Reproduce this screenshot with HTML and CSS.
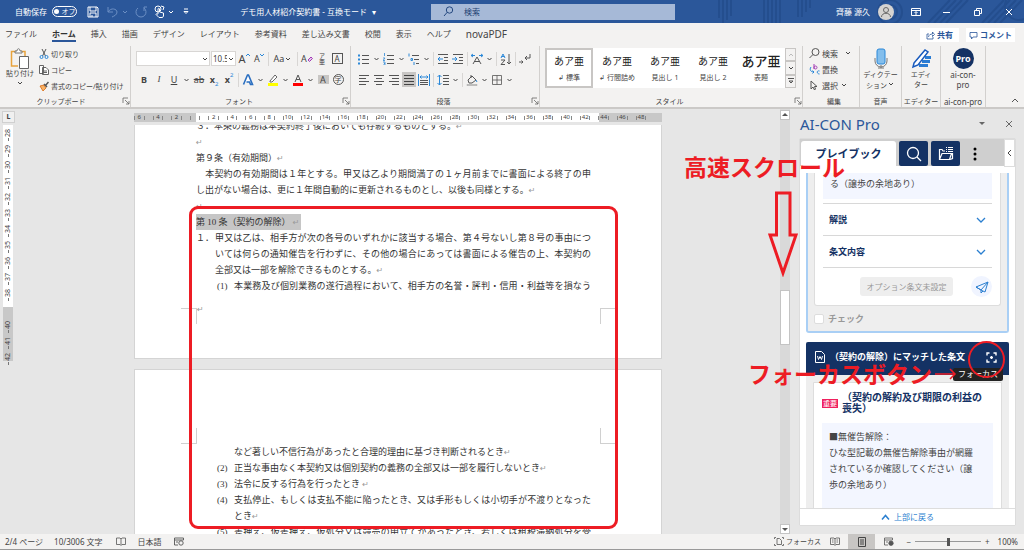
FILE: index.html
```html
<!DOCTYPE html>
<html lang="ja">
<head>
	<meta charset="UTF-8">
	<title>デモ用人材紹介契約書</title>
	<link rel="stylesheet" href="styles.css">
</head>
<body>
	<svg class="defs" aria-hidden="true">
		<symbol id="chev" viewBox="0 0 8 8"><path d="M2 3l2 2 2-2" fill="none" stroke="currentColor"/></symbol>
		<symbol id="launch" viewBox="0 0 8 8"><path d="M1 6V1h5M3 3l4 4M7 4v3H4" fill="none" stroke="#666" stroke-width=".8"/></symbol>
	</svg>

	<header class="titlebar">
		<svg class="pattern" viewBox="0 0 310 23" preserveAspectRatio="xMaxYMid slice" fill="none" stroke="#244e8e" stroke-width="2">
			<path d="M5 0v18M9 0v23M13 0v20M17 0v16M50 0v23M54 0v23M58 0v23M62 0v23M66 0v23M84 0v17M88 0v17M92 0v12M96 0v8"/>
			<circle cx="176" cy="12" r="7"/><circle cx="176" cy="12" r="12"/>
			<path d="M214 23l22-23M220 23l22-23M226 23l22-23M232 23l22-23M268 23l22-23M274 23l22-23M280 23l22-23M286 23l22-23"/>
			<circle cx="305" cy="6" r="14"/>
		</svg>
		<div class="title-left">
			<label class="autosave">自動保存 <button class="switch">オフ</button></label>
			<button class="ico"><svg width="12" height="12" viewBox="0 0 12 12" fill="none" stroke="#fff"><path d="M1 1h9l1 1v9H1zM3 1v4h6V1M3 11V7h6v4M5 9v2"/></svg></button>
			<button class="ico dim"><svg width="12" height="12" viewBox="0 0 12 12" fill="none" stroke="#6c8fc4"><path d="M1 1v5h5M1 6c3-5 9-3 9 0 0 3-3 4-5 5"/></svg></button>
			<svg class="chev dim" width="8" height="8"><use href="#chev"/></svg>
			<button class="ico dim"><svg width="12" height="12" viewBox="0 0 12 12" fill="none" stroke="#6c8fc4"><path d="M3 2a5 5 0 1 0 6 0M9 5V1h3"/></svg></button>
			<button class="ico"><svg width="11" height="13" viewBox="0 0 11 13" fill="none" stroke="#fff"><circle cx="4" cy="4" r="3"/><path d="M4 9V4c0-1 1.500-1 1.500 0v3l4 1v3l-1 1.500H5L2 9.500c0-1 1-1 2 0M7 1l3 1-1 3"/></svg></button>
			<svg class="chev" width="8" height="8"><use href="#chev"/></svg>
			<svg class="more" width="8" height="8" viewBox="0 0 8 8" fill="none" stroke="#fff"><path d="M2 1h4M2 3.500h4l-2 2z"/></svg>
			<span class="doc-title">デモ用人材紹介契約書 - 互換モード</span>
			<span class="caret">▾</span>
		</div>
		<label class="search">
			<svg width="11" height="11" viewBox="0 0 11 11" fill="none" stroke="#24487f"><circle cx="6.500" cy="4" r="3.200"/><path d="M4.200 6.300L1 10"/></svg>
			<input type="text" value="検索" aria-label="検索">
		</label>
		<div class="title-right">
			<span>齊藤 源久</span>
			<svg width="16" height="16" viewBox="0 0 16 16"><circle cx="8" cy="8" r="8" fill="#d5d3d1"/><g fill="none" stroke="#666"><circle cx="8" cy="6" r="2.500"/><path d="M3.500 13c0-5 9-5 9 0"/></g></svg>
			<button class="win"><svg width="10" height="8" viewBox="0 0 10 8" fill="none" stroke="#fff"><path d="M.5.5h9v7h-9zM.5 2.500h9M5 7V4M3.500 5L5 3.500 6.500 5"/></svg></button>
			<button class="win"><svg width="8" height="8" viewBox="0 0 8 8" stroke="#fff"><path d="M0 4.500h7"/></svg></button>
			<button class="win"><svg width="8" height="8" viewBox="0 0 8 8" fill="none" stroke="#fff"><path d="M.5 2.500h5v5h-5zM2.500 2V.5h5v5H6"/></svg></button>
			<button class="win"><svg width="8" height="8" viewBox="0 0 8 8" stroke="#fff"><path d="M1 1l6 6M7 1L1 7"/></svg></button>
		</div>
	</header>

	<nav class="tabs">
		<a href="#">ファイル</a>
		<a href="#" class="active">ホーム</a>
		<a href="#">挿入</a>
		<a href="#">描画</a>
		<a href="#">デザイン</a>
		<a href="#">レイアウト</a>
		<a href="#">参考資料</a>
		<a href="#">差し込み文書</a>
		<a href="#">校閲</a>
		<a href="#">表示</a>
		<a href="#">ヘルプ</a>
		<a href="#" class="latin">novaPDF</a>
		<div class="share">
			<button><svg width="9" height="9" viewBox="0 0 9 9" fill="none" stroke="#2b579a" stroke-width=".8"><path d="M3 3H1v5h6V6M2.500 6c0-2 2-3 4-3V1l2 2.500-2 2V4"/></svg>共有</button>
			<button><svg width="9" height="9" viewBox="0 0 9 9" fill="none" stroke="#2b579a" stroke-width=".8"><path d="M1 1.500h7v4.500H4L2.500 8V6H1z"/></svg>コメント</button>
		</div>
	</nav>

	<section class="ribbon">
		<div class="group g-clip">
			<div class="body clip">
				<button class="big">
					<svg width="20" height="21" viewBox="0 0 20 21" fill="none"><path d="M8 18H1.500V3.500H15V8" stroke="#e8a33d" stroke-width="1.500"/><path d="M5 5V3h2c0-3 3-3 3 0h2v2z" fill="#fff" stroke="#777"/><path d="M9.500 8.500h9v12h-9z" fill="#fff" stroke="#666"/></svg>
					<span>貼り付け</span>
					<svg width="8" height="8"><use href="#chev"/></svg>
				</button>
				<div class="stack">
					<button><svg width="10" height="10" viewBox="0 0 10 10" fill="none"><path d="M3 0l3.500 7M7 0L3.500 7" stroke="#555"/><circle cx="2.500" cy="8" r="1.500" stroke="#2b88d8"/><circle cx="7.500" cy="8" r="1.500" stroke="#2b88d8"/></svg>切り取り</button>
					<button><svg width="10" height="10" viewBox="0 0 10 10" fill="#fff" stroke="#555" stroke-width=".9"><path d="M.5.5h4v8h-4zM3.500 2.500h3.500l2.500 2.500v4.500h-6zM5 6h3M5 7.500h3"/></svg>コピー</button>
					<button><svg width="10" height="10" viewBox="0 0 10 10"><path d="M1 5l4-1 2 3-3 3z" fill="#f7b267" stroke="#d9690f" stroke-width=".8"/><path d="M5 3l3 3M6.500 4.500L9.500 1" stroke="#555" stroke-width="1.500"/></svg>書式のコピー/貼り付け</button>
				</div>
			</div>
			<div class="caption"><span>クリップボード</span><svg width="8" height="8"><use href="#launch"/></svg></div>
		</div>

		<div class="group g-font">
			<div class="body">
				<div class="row">
					<span class="combo face"><select aria-label="フォント"><option></option></select><svg width="8" height="8"><use href="#chev"/></svg></span>
					<span class="combo size"><select aria-label="サイズ"><option>10.5</option></select><svg width="8" height="8"><use href="#chev"/></svg></span>
					<button class="t"><span class="lg">A</span><svg class="up" width="4" height="4" viewBox="0 0 4 4"><path d="M0 3l2-2 2 2" fill="none" stroke="#2b88d8"/></svg></button>
					<button class="t"><span>A</span><svg class="up" width="4" height="4" viewBox="0 0 4 4"><path d="M0 1l2 2 2-2" fill="none" stroke="#2b88d8"/></svg></button>
					<i class="sep"></i>
					<button class="t wide">Aa<svg width="8" height="8"><use href="#chev"/></svg></button>
					<i class="sep"></i>
					<button class="t">A<svg width="6" height="7" viewBox="0 0 6 7"><path d="M1 5l3-3 1.500 1.500-3 3z" fill="#e6c7ee" stroke="#a23bb5"/></svg></button>
					<button class="ruby"><span>ア</span><span>亜</span></button>
					<button class="t"><span class="boxed">A</span></button>
				</div>
				<div class="row">
					<button class="t"><b>B</b></button>
					<button class="t serif"><i>I</i></button>
					<button class="t"><u>U</u></button>
					<svg class="dd" viewBox="0 0 8 8"><use href="#chev"/></svg>
					<button class="t"><s>ab</s></button>
					<button class="t"><b>x</b><sub>2</sub></button>
					<button class="t"><b>x</b><sup>2</sup></button>
					<i class="sep"></i>
					<button><svg width="12" height="12" viewBox="0 0 12 12"><path d="M1.500 10.500L5.500 1h1l4 9.500h-2L7.500 8h-3" fill="#fff" stroke="#2b6fc0" stroke-width="1.600"/></svg></button>
					<svg class="dd" viewBox="0 0 8 8"><use href="#chev"/></svg>
					<button><svg width="12" height="12" viewBox="0 0 12 12"><path d="M3 7l5-6 2 2-5 5H3z" fill="#fff" stroke="#666"/><path d="M1 9h10v3H1z" fill="#ff0"/></svg></button>
					<svg class="dd" viewBox="0 0 8 8"><use href="#chev"/></svg>
					<button><svg width="12" height="12" viewBox="0 0 12 12"><path d="M3 8l3-7 3 7M4 5.500h4" fill="none" stroke="#555"/><path d="M1 9h10v3H1z" fill="#f00"/></svg></button>
					<svg class="dd" viewBox="0 0 8 8"><use href="#chev"/></svg>
					<button class="t"><span class="shaded">A</span></button>
					<button class="t"><span class="circled">字</span></button>
				</div>
			</div>
			<div class="caption"><span>フォント</span><svg width="8" height="8"><use href="#launch"/></svg></div>
		</div>

		<div class="group g-para">
			<div class="body">
				<div class="row">
					<button><svg width="12" height="12" viewBox="0 0 12 12"><path d="M4 2.500h7M4 6.500h7M4 10.500h7" stroke="#555"/><path d="M0 1.500h2v2H0zM0 5.500h2v2H0zM0 9.500h2v2H0z" fill="#2b88d8"/></svg></button>
					<svg class="dd" viewBox="0 0 8 8"><use href="#chev"/></svg>
					<button><svg width="12" height="12" viewBox="0 0 12 12" fill="none"><path d="M4 2.500h7M4 6.500h7M4 10.500h7" stroke="#555"/><path d="M1.500 0v3M0 5h2L0 7.500h2M0 9h2v3H0M1 10.500h1" stroke="#2b88d8" stroke-width=".8"/></svg></button>
					<svg class="dd" viewBox="0 0 8 8"><use href="#chev"/></svg>
					<button><svg width="12" height="12" viewBox="0 0 12 12" fill="none"><path d="M4 2.500h7M6 6.500h5M8 10.500h3" stroke="#555"/><path d="M1 .5v3M3 5.500h1.500v2H3zM6 9v3" stroke="#2b88d8"/></svg></button>
					<svg class="dd" viewBox="0 0 8 8"><use href="#chev"/></svg>
					<i class="sep"></i>
					<button><svg width="12" height="12" viewBox="0 0 12 12" fill="none"><path d="M1 1.500h10M7 4.500h4M7 7.500h4M1 10.500h10" stroke="#555"/><path d="M6 6H1M3 4L1 6l2 2" stroke="#2b88d8"/></svg></button>
					<button><svg width="12" height="12" viewBox="0 0 12 12" fill="none"><path d="M1 1.500h10M7 4.500h4M7 7.500h4M1 10.500h10" stroke="#555"/><path d="M0 6h5M3 4l2 2-2 2" stroke="#2b88d8"/></svg></button>
					<i class="sep"></i>
					<button><svg width="12" height="12" viewBox="0 0 12 12" fill="none"><path d="M2 11l4-7 4 7M3 8.500h6" stroke="#555"/><path d="M0 2.500h4M2 1L0 2.500 2 4M12 2.500H8M10 1l2 1.500L10 4" stroke="#2b88d8"/></svg></button>
					<svg class="dd" viewBox="0 0 8 8"><use href="#chev"/></svg>
					<i class="sep"></i>
					<button><svg width="12" height="12" viewBox="0 0 12 12" fill="none"><path d="M1 5l2-4 2 4M1.500 3.500h3" stroke="#2b88d8"/><path d="M1 7h4L1 11.500h4M9 1v10M7 9l2 2 2-2" stroke="#555"/></svg></button>
					<i class="sep"></i>
					<button><svg width="12" height="12" viewBox="0 0 12 12" fill="none" stroke="#555"><path d="M11 1v4H6M8 3L6 5l2 2M0 9h4M2.500 7.500L4 9l-1.500 1.500"/></svg></button>
				</div>
				<div class="row">
					<button><svg width="12" height="12" viewBox="0 0 12 12" stroke="#555"><path d="M1 1.500h10M1 4.500h7M1 7.500h10M1 10.500h7"/></svg></button>
					<button><svg width="12" height="12" viewBox="0 0 12 12" stroke="#555"><path d="M1 1.500h10M3 4.500h6M1 7.500h10M3 10.500h6"/></svg></button>
					<button><svg width="12" height="12" viewBox="0 0 12 12" stroke="#555"><path d="M1 1.500h10M4 4.500h7M1 7.500h10M4 10.500h7"/></svg></button>
					<button class="on"><svg width="12" height="12" viewBox="0 0 12 12" stroke="#444"><path d="M1 1.500h10M1 4.500h10M1 7.500h10M1 10.500h10"/></svg></button>
					<button><svg width="12" height="12" viewBox="0 0 12 12" fill="none"><path d="M.5 0v12M11.500 0v12M2 3h8M3.500 1.500L2 3l1.500 1.500M8.500 1.500L10 3 8.500 4.500" stroke="#2b88d8"/><path d="M2 6.500h8M2 8.500h8M2 10.500h8" stroke="#555"/></svg></button>
					<i class="sep"></i>
					<button><svg width="12" height="12" viewBox="0 0 12 12" fill="none"><path d="M6 1.500h6M6 4.500h6M6 7.500h6M6 10.500h6" stroke="#555"/><path d="M2.500 1v10M.5 3l2-2 2 2M.5 9l2 2 2-2" stroke="#2b88d8"/></svg></button>
					<svg class="dd" viewBox="0 0 8 8"><use href="#chev"/></svg>
					<i class="sep"></i>
					<button><svg width="12" height="12" viewBox="0 0 12 12" fill="none"><path d="M2 6l4-4 4 4-4 3H3zM5 4V1" stroke="#555"/><path d="M10 6l1 2" stroke="#2b88d8"/><path d="M1 10.500h10v1H1z" stroke="#999" stroke-width=".6"/></svg></button>
					<svg class="dd" viewBox="0 0 8 8"><use href="#chev"/></svg>
					<button><svg width="12" height="12" viewBox="0 0 12 12" fill="none" stroke="#555"><path d="M1.500 1.500h9v9h-9zM6 1.500v9M1.500 6h9" stroke-width=".8"/></svg></button>
					<svg class="dd" viewBox="0 0 8 8"><use href="#chev"/></svg>
				</div>
			</div>
			<div class="caption"><span>段落</span><svg width="8" height="8"><use href="#launch"/></svg></div>
		</div>

		<div class="group g-style">
			<div class="body gallery">
				<button class="cell picked"><span class="sample">あア亜</span><span>↲ 標準</span></button>
				<button class="cell"><span class="sample">あア亜</span><span>↲ 行間詰め</span></button>
				<button class="cell"><span class="sample">あア亜</span><span>見出し 1</span></button>
				<button class="cell"><span class="sample">あア亜</span><span>見出し 2</span></button>
				<button class="cell"><span class="sample title">あア亜</span><span>表題</span></button>
				<div class="spin">
					<button><svg width="8" height="8" viewBox="0 0 8 8"><path d="M2 5l2-2 2 2" fill="none" stroke="#bbb"/></svg></button>
					<button><svg width="8" height="8"><use href="#chev"/></svg></button>
					<button><svg width="8" height="8" viewBox="0 0 8 8"><path d="M1 1.500h6M2 4h4L4 6z" fill="none" stroke="#555"/></svg></button>
				</div>
			</div>
			<div class="caption"><span>スタイル</span><svg width="8" height="8"><use href="#launch"/></svg></div>
		</div>

		<div class="group g-edit">
			<div class="body stack">
				<button><svg width="11" height="11" viewBox="0 0 11 11" fill="none" stroke="#555"><circle cx="6.500" cy="4" r="3.500"/><path d="M4 6.500L.5 10"/></svg>検索<svg class="gap" width="8" height="8"><use href="#chev"/></svg></button>
				<button><svg width="11" height="11" viewBox="0 0 11 11" fill="none"><path d="M5 0v5M5 3.500c0-2 3-2 3 0s-3 2-3 0" stroke="#a23bb5"/><path d="M2 3c-2 3 0 5 3 5M3.500 6.500L5 8 3.500 9.500M10.500 7c-3-1-3 3 0 3" stroke="#2b88d8"/></svg>置換</button>
				<button><svg width="11" height="11" viewBox="0 0 11 11" fill="none" stroke="#555"><path d="M2 1v8l2-2 1.500 3 1-1L5.500 6.500H8z"/></svg>選択<svg width="8" height="8"><use href="#chev"/></svg></button>
			</div>
			<div class="caption"><span>編集</span></div>
		</div>

		<div class="group g-voice">
			<button class="body big">
				<svg width="14" height="21" viewBox="0 0 14 21"><path d="M1 10v3a5 5 0 0 0 12 0v-3M7 17v3M4 20h6" fill="none" stroke="#777"/><rect x="3" y="1" width="8" height="15" rx="2" fill="#83beec" stroke="#2b88d8"/></svg>
				<span>ディクテー<br>ション<svg width="8" height="8"><use href="#chev"/></svg></span>
			</button>
			<div class="caption"><span>音声</span></div>
		</div>

		<div class="group g-editor">
			<button class="body big">
				<svg width="21" height="21" viewBox="0 0 21 21" fill="none"><path d="M8 17.500h9M11 13.500h8M14 9.500h6" stroke="#2b7cd3" stroke-width="3"/><path d="M3 15L14 2l3 2L7 17l-5 2z" fill="#fff" stroke="#185abd" stroke-width="1.500"/></svg>
				<span>エディ<br>ター</span>
			</button>
			<div class="caption"><span>エディター</span></div>
		</div>

		<div class="group g-ai">
			<button class="body big">
				<span class="pro">Pro</span>
				<span class="latin">ai-con-<br>pro</span>
			</button>
			<div class="caption latin"><span>ai-con-pro</span></div>
		</div>

		<button class="collapse"><svg width="8" height="8" viewBox="0 0 8 8"><path d="M1 5l3-3 3 3" fill="none" stroke="#555"/></svg></button>
	</section>

	<main class="work">
		<div class="vruler">
			<button class="corner">L</button>
			<div class="scale" id="vscale"></div>
		</div>

		<div class="canvas">
			<div class="hruler" id="hscale"></div>
			<div class="pages">
				<article class="page first">
					<div class="text">
						<p>３．本条の義務は本契約終了後においても存続するものとする。<em>↵</em></p>
						<p><em>↵</em></p>
						<p>第９条（有効期間）<em>↵</em></p>
						<p>　本契約の有効期間は１年とする。甲又は乙より期間満了の１ヶ月前までに書面による終了の申し出がない場合は、更に１年間自動的に更新されるものとし、以後も同様とする。<em>↵</em></p>
						<p><em>↵</em></p>
						<p><mark>第 10 条（契約の解除） <em>↵</em></mark></p>
						<div class="item"><span>１．</span><p>甲又は乙は、相手方が次の各号のいずれかに該当する場合、第４号ないし第８号の事由については何らの通知催告を行わずに、その他の場合にあっては書面による催告の上、本契約の全部又は一部を解除できるものとする。<em>↵</em></p></div>
						<div class="item sub"><span>(1)</span><p class="cont">本業務及び個別業務の遂行過程において、相手方の名誉・評判・信用・利益等を損なう</p></div>
					</div>
					<div class="crop bottom"><i></i><em>↵</em><i></i></div>
				</article>
				<article class="page">
					<div class="crop top"><i></i><i></i></div>
					<div class="text">
						<div class="item sub"><span></span><p>など著しい不信行為があったと合理的理由に基づき判断されるとき<em>↵</em></p></div>
						<div class="item sub"><span>(2)</span><p>正当な事由なく本契約又は個別契約の義務の全部又は一部を履行しないとき<em>↵</em></p></div>
						<div class="item sub"><span>(3)</span><p>法令に反する行為を行ったとき <em>↵</em></p></div>
						<div class="item sub"><span>(4)</span><p>支払停止、もしくは支払不能に陥ったとき、又は手形もしくは小切手が不渡りとなったとき<em>↵</em></p></div>
						<div class="item sub"><span>(5)</span><p class="cont">差押え、仮差押え、仮処分又は競売の申立てがあったとき、若しくは租税滞納処分を受</p></div>
					</div>
				</article>
			</div>
		</div>

		<div class="vscroll">
			<button><svg width="6" height="6" viewBox="0 0 6 6"><path d="M0 4l3-3 3 3z" fill="#555"/></svg></button>
			<span class="before"></span>
			<span class="thumb"></span>
			<span class="after"></span>
			<button><svg width="6" height="6" viewBox="0 0 6 6"><path d="M0 2l3 3 3-3z" fill="#555"/></svg></button>
		</div>

		<aside class="pane">
			<div class="pane-head">
				<h2>AI-CON Pro</h2>
				<button><svg width="8" height="8" viewBox="0 0 8 8"><path d="M1 2h6L4 5z" fill="#666"/></svg></button>
				<button><svg width="8" height="8" viewBox="0 0 8 8"><path d="M1 1l6 6M7 1L1 7" stroke="#666"/></svg></button>
			</div>
			<div class="pane-box">
				<div class="pane-tabs">
					<button class="tab">プレイブック</button>
					<button class="navy"><svg width="16" height="16" viewBox="0 0 16 16" fill="none" stroke="#fff" stroke-width="1.300"><circle cx="7" cy="7" r="5.500"/><path d="M11 11l4 4"/></svg></button>
					<button class="navy"><svg width="16" height="16" viewBox="0 0 16 16" fill="none" stroke="#fff" stroke-width="1.200"><path d="M7 5H5L4 3.500H1.500v10h10l2-6H4l-2.500 6M12 13.500l2.500-1V7M8 1.500h1M10 1.500h5M8 3.500h1M10 3.500h5M8 5.500h1M10 5.500h5"/></svg></button>
					<button class="kebab"><svg width="4" height="14" viewBox="0 0 4 14"><circle cx="2" cy="2" r="1.500"/><circle cx="2" cy="7" r="1.500"/><circle cx="2" cy="12" r="1.500"/></svg></button>
					<button class="fold"><svg width="6" height="8" viewBox="0 0 6 8"><path d="M4 1L1 4l3 3" fill="none" stroke="#444"/></svg></button>
				</div>
				<div class="pane-scroll">
					<section class="card current">
						<div class="inner">
							<p class="note">る（譲歩の余地あり）</p>
							<button class="fold-row">解説<svg width="10" height="8" viewBox="0 0 10 8"><path d="M1 2l4 4 4-4" fill="none" stroke="#2b7fd0" stroke-width="1.300"/></svg></button>
							<button class="fold-row">条文内容<svg width="10" height="8" viewBox="0 0 10 8"><path d="M1 2l4 4 4-4" fill="none" stroke="#2b7fd0" stroke-width="1.300"/></svg></button>
							<div class="actions">
								<button class="option" disabled>オプション条文未設定</button>
								<button class="send"><svg width="14" height="14" viewBox="0 0 14 14" fill="none" stroke="#2b7fd0"><path d="M1 7l12-5-3 10-4-2zM6 10v3l2-2M6 10l7-8M1 7l5 3"/></svg></button>
							</div>
						</div>
						<label class="check"><input type="checkbox">チェック</label>
					</section>
					<section class="card">
						<header>
							<svg width="10" height="12" viewBox="0 0 10 12" fill="none" stroke="#fff"><path d="M.5.500h6l3 3v8h-9z"/><path d="M2.500 5l1 3.500L5 5.500l1.500 3 1-3.500"/></svg>
							<h3>（契約の解除）にマッチした条文</h3>
							<button class="focus"><svg width="11" height="11" viewBox="0 0 11 11" fill="none" stroke="#fff" stroke-width="1.400"><path d="M1 3.500V1h2.500M7.500 1H10v2.500M10 7.500V10H7.500M3.500 10H1V7.500M5.500 4v3M4 5.500h3"/></svg></button>
							<span class="tip">フォーカス</span>
						</header>
						<div class="inner">
							<div class="heading"><span class="tag">重要</span><h4>（契約の解約及び期限の利益の<br>喪失）</h4></div>
							<p class="note tall">■無催告解除：<br>ひな型記載の無催告解除事由が網羅<br>されているか確認してください（譲<br>歩の余地あり）</p>
						</div>
					</section>
				</div>
				<a href="#" class="totop"><svg width="9" height="7" viewBox="0 0 9 7"><path d="M1 5.500l3.500-4 3.500 4" fill="none" stroke="#2b7fd0" stroke-width="1.500"/></svg>上部に戻る</a>
			</div>
		</aside>
	</main>

	<footer class="status">
		<span class="pg">2/4 ページ</span>
		<span class="wc">10/3006 文字</span>
		<svg class="i1" width="10" height="9" viewBox="0 0 10 9" fill="none" stroke="#555" stroke-width=".8"><path d="M.5 1H4l1 1 1-1h3.500v6.500H6l-1 1-1-1H.5zM5 2v6"/></svg>
		<span class="lang">日本語</span>
		<svg width="10" height="9" viewBox="0 0 10 9" fill="none" stroke="#555" stroke-width=".9"><path d="M4 8H.5V1h9v2M.5 3h9M2 5h2"/><circle cx="7" cy="6" r="2.200"/></svg>
		<div class="views">
			<button class="fc"><svg width="10" height="9" viewBox="0 0 10 9" fill="none" stroke="#555" stroke-width=".8"><path d="M2 .5H.5V2M.5 7v1.500H2M8 .5h1.500V2M9.500 7v1.500H8M3 1.500h2.500l2 2v4H3z"/></svg>フォーカス</button>
			<button><svg width="10" height="9" viewBox="0 0 10 9" fill="none" stroke="#555" stroke-width=".8"><path d="M.5 1H4l1 1 1-1h3.500v6.500H6l-1 1-1-1H.5zM5 2v6M2 3h1.500M2 5h1.500M6.500 3H8M6.500 5H8"/></svg></button>
			<button class="on"><svg width="8" height="10" viewBox="0 0 8 10" fill="none" stroke="#444"><path d="M.5.500h7v9h-7zM2 3h4M2 5h4M2 7h4"/></svg></button>
			<button><svg width="10" height="9" viewBox="0 0 10 9" fill="none" stroke="#555" stroke-width=".8"><path d="M4 8H.5V1h8v2M.5 3h8M2 5h2"/><circle cx="7" cy="6.200" r="2.200" fill="#555"/></svg></button>
			<span class="minus">−</span>
			<input type="range" min="10" max="190" value="100" aria-label="ズーム">
			<span>+</span>
			<span class="pct">100%</span>
		</div>
	</footer>

	<!-- 説明用の赤い書き込み -->
	<div class="frame"></div>
	<div class="callout scroll">高速スクロール</div>
	<svg class="arrow" width="30" height="86" viewBox="0 0 30 86"><path d="M8.500 2v42H2l13 38 13-38h-6V2z" fill="none" stroke="#ed1c24" stroke-width="3"/></svg>
	<div class="callout button">フォーカスボタン<svg width="23" height="14" viewBox="0 0 23 14"><path d="M1 7h20M16 2l5 5-5 5" fill="none" stroke="#ed1c24" stroke-width="1.500"/></svg></div>
	<div class="ring"></div>

	<script>
		var h = document.getElementById("hscale");
		for (var n = -6; n <= 48; n += 2) {
			var s = document.createElement("span");
			s.textContent = n === 0 ? "" : Math.abs(n);
			h.appendChild(s);
		}

		var v = document.getElementById("vscale");
		for (var m = 28; m <= 42; m++) {
			var t = document.createElement("span");
			t.textContent = m === 39 ? "" : m;
			v.appendChild(t);
		}
	</script>
</body>
</html>
```

FILE: styles.css
```css
* {
	box-sizing: border-box;
}

body {
	margin: 0;
	height: 100vh;
	display: flex;
	flex-direction: column;
	overflow: hidden;
	position: relative;
	background: #e6e6e6;
	color: #444;
	font-family: "Noto Sans", "Noto Sans CJK JP", sans-serif;
	font-size: 8px;
	line-height: 12px;
}

button, input, select {
	font: inherit;
	color: inherit;
	background: none;
	border: none;
	padding: 0;
	margin: 0;
}

button {
	display: flex;
	align-items: center;
	justify-content: center;
	white-space: nowrap;
}

a {
	color: inherit;
	text-decoration: none;
}

p, h2, h3, h4 {
	margin: 0;
}

em {
	font-family: "DejaVu Sans", sans-serif;
	font-style: normal;
	font-size: 8px;
	color: #999;
}

svg {
	flex: none;
}

.defs {
	position: absolute;
	width: 0;
	height: 0;
}

/* title bar */
.titlebar {
	flex: none;
	position: relative;
	height: 23px;
	display: grid;
	grid-template-columns: 431fr 244fr 349fr;
	align-items: center;
	background: #2b579a;
	color: #fff;
}

.pattern {
	position: absolute;
	right: 0;
	top: 0;
	width: 310px;
	height: 23px;
}

.title-left, .title-right {
	position: relative;
	display: flex;
	align-items: center;
}

.title-left {
	padding-left: 15px;
}

.autosave {
	display: flex;
	align-items: center;
	gap: 5px;
	margin-right: 10px;
}

.switch {
	width: 25px;
	height: 11px;
	border: 1px solid #fff;
	border-radius: 6px;
	gap: 3px;
	font-size: 7px;
}

.switch::before {
	content: "";
	width: 5px;
	height: 5px;
	border-radius: 50%;
	background: #fff;
}

.title-left .ico {
	margin-right: 8px;
}

.title-left .dim {
	margin-right: 2px;
	color: #6c8fc4;
}

.title-left .chev.dim {
	margin-right: 6px;
}

.title-left .dim + .ico:not(.dim) {
	margin: 0 2px 0 5px;
}

.more {
	margin-left: 7px;
}

.doc-title {
	flex: 1;
	text-align: right;
	white-space: nowrap;
}

.caret {
	margin: 0 55px 0 5px;
}

.search {
	display: flex;
	align-items: center;
	gap: 10px;
	height: 16px;
	padding-left: 12px;
	background: #a6b9d7;
	color: #1e3f73;
}

.search input {
	flex: 1;
	min-width: 0;
}

.title-right {
	justify-content: flex-end;
	padding-right: 8px;
	gap: 8px;
}

.win {
	width: 14px;
	margin-left: 9px;
}

.title-right svg + .win {
	margin-left: 7px;
}

/* ribbon tabs */
.tabs {
	flex: none;
	display: flex;
	align-items: center;
	gap: 15px;
	height: 23px;
	padding: 0 9px 0 5px;
	background: #f3f2f1;
	white-space: nowrap;
}

.tabs a {
	padding-top: 1px;
	border-bottom: 2px solid transparent;
}

.tabs .active {
	border-color: #2b579a;
	color: #333;
	font-weight: bold;
}

.tabs .latin {
	font-size: 10px;
}

.share {
	display: flex;
	gap: 7px;
	margin-left: auto;
}

.share button {
	gap: 2px;
	height: 14px;
	padding: 0 3px;
	margin-top: 1px;
	background: #fff;
	color: #2b579a;
	font-weight: bold;
}

.share button:first-child {
	width: 39px;
}

/* ribbon */
.ribbon {
	flex: none;
	display: flex;
	align-items: stretch;
	height: 63px;
	background: #f3f2f1;
	border-bottom: 2px solid #cbc9c7;
	font-size: 7px;
	line-height: 9px;
}

.group {
	flex: none;
	display: flex;
	flex-direction: column;
	justify-content: space-between;
	border-right: 1px solid #d2d0ce;
	padding-bottom: 1px;
}

.g-clip { width: 131px; }
.g-font { width: 220px; padding-left: 5px; }
.g-para { width: 189px; padding-left: 5px; }
.g-style { flex: 1; padding-left: 5px; }
.g-edit { width: 57px; padding-left: 6px; }
.g-voice { width: 42px; }
.g-editor { width: 39px; }
.g-ai { width: 45px; }

.caption {
	display: flex;
	justify-content: center;
	align-items: center;
	height: 10px;
	white-space: nowrap;
}

.caption span {
	flex: 1;
	text-align: center;
}

.body {
	padding-top: 5px;
}

.clip {
	display: flex;
	gap: 5px;
	padding: 2px 0 0 6px;
}

.big {
	flex-direction: column;
	gap: 1px;
	padding-top: 2px;
	line-height: 10px;
}

.clip .big {
	padding: 0;
	justify-content: flex-start;
	gap: 0;
}

.stack {
	display: flex;
	flex-direction: column;
	gap: 4px;
}

.stack button {
	height: 12px;
	gap: 2px;
	justify-content: flex-start;
}

.g-edit .stack {
	padding-top: 1px;
	font-size: 8px;
}

.g-edit .gap {
	margin-left: 4px;
}

.row {
	display: flex;
	align-items: center;
	gap: 1px;
	height: 15px;
	margin-bottom: 6px;
	padding-left: 1px;
}

.g-font .row:first-child {
	padding-left: 0;
}

.row > button {
	width: 14px;
	height: 15px;
	flex: none;
}

.row .on {
	background: #c8c6c4;
}

.row .wide {
	width: 24px;
}

.row .dd {
	width: 9px;
	height: 8px;
}

.sep {
	flex: none;
	width: 1px;
	height: 14px;
	margin: 0 1px;
	background: #d8d6d4;
}

.t {
	font-size: 9px;
}

.t .lg {
	font-size: 11px;
}

.t .up {
	margin-bottom: 7px;
}

.t sub, .t sup {
	font-size: 6px;
	line-height: 6px;
	color: #2b88d8;
}

.t sub {
	align-self: flex-end;
}

.t sup {
	align-self: flex-start;
}

.serif {
	font-family: "Liberation Serif", serif;
}

.boxed {
	width: 11px;
	border: 1px solid #555;
	font-size: 8px;
}

.shaded {
	width: 11px;
	background: #c8c6c4;
}

.circled {
	width: 11px;
	height: 11px;
	border: 1px solid #555;
	border-radius: 50%;
	font-size: 7px;
}

.ruby {
	flex-direction: column;
	font-size: 6px;
	line-height: 6px;
}

.combo {
	position: relative;
	display: flex;
	height: 15px;
	background: #fff;
	border: 1px solid #d8d6d4;
}

.combo select {
	appearance: none;
	width: 100%;
	font-size: 8px;
	padding-left: 1px;
}

.combo svg {
	position: absolute;
	right: 0;
	top: 3px;
	background: #fff;
}

.face { width: 74px; }
.size { width: 25px; }

.gallery {
	display: flex;
	height: 40px;
	margin: 2px 6px 0 0;
	padding: 0;
	background: #fff;
}

.cell {
	flex: 1;
	flex-direction: column;
	gap: 6px;
	min-width: 0;
	overflow: hidden;
	border: 2px solid transparent;
	padding-top: 2px;
}

.picked {
	border-color: #c8c6c4;
}

.sample {
	color: #222;
	font-size: 10px;
	line-height: 11px;
}

.sample.title {
	font-size: 13px;
	font-weight: 500;
}

.spin {
	display: flex;
	flex-direction: column;
	width: 11px;
}

.spin button {
	flex: 1;
	background: #f3f2f1;
	border: 1px solid #c8c6c4;
}

.latin {
	font-size: 8px;
}

.pro {
	display: flex;
	align-items: center;
	justify-content: center;
	width: 21px;
	height: 21px;
	border-radius: 50%;
	background: #143264;
	color: #fff;
	font-size: 9px;
	font-weight: bold;
}

.collapse {
	align-self: flex-end;
	width: 38px;
	height: 12px;
	padding-left: 20px;
}

/* work area */
.work {
	flex: 1;
	min-height: 0;
	display: grid;
	grid-template-columns: 16px 1fr 10px 234px;
}

.vruler {
	padding: 2px 1px 0 2px;
	overflow: hidden;
}

.corner {
	width: 13px;
	height: 12px;
	border: 1px solid #d0d0d0;
	background: #f0f0f0;
	font-weight: bold;
	font-size: 7px;
}

.scale {
	width: 10px;
	height: 236px;
	margin: 2px 0 0 1px;
	font-size: 7px;
	line-height: 10px;
	background: linear-gradient(#fff 182px, #c8c8c8 182px);
}

.scale span {
	display: flex;
	justify-content: center;
	align-items: center;
	height: 16px;
	writing-mode: vertical-rl;
	transform: rotate(180deg);
	position: relative;
}

.scale span::before {
	content: "";
	position: absolute;
	left: 4px;
	top: 0;
	width: 1px;
	height: 3px;
	background: #777;
}

.canvas {
	display: flex;
	flex-direction: column;
	align-items: center;
	min-width: 0;
	min-height: 0;
	overflow: hidden;
}

.hruler {
	flex: none;
	display: flex;
	width: 528px;
	height: 9px;
	margin: 4px 0 3px;
	padding-right: 8px;
	background: linear-gradient(90deg, #c8c8c8 62px, #fff 62px, #fff 465px, #c8c8c8 465px);
	font-size: 6px;
	line-height: 9px;
}

.hruler span {
	flex: 1;
	display: flex;
	align-items: center;
	justify-content: space-between;
	padding: 0 4px;
	position: relative;
	left: -4px;
}

.hruler span::before, .hruler span::after {
	content: "";
	width: 1px;
	height: 4px;
	background: #888;
}

.pages {
	flex: 1;
	min-height: 0;
	overflow: hidden;
}

.page {
	width: 528px;
	margin-bottom: 10px;
	background: #fff;
	border: 1px solid #d4d4d4;
}

.first {
	margin-top: -8px;
}

.text {
	width: 395px;
	margin-left: 61px;
	font-family: "Liberation Serif", "Noto Sans CJK JP", serif;
	font-size: 9px;
	line-height: 16px;
	color: #333;
	text-align: justify;
}

.text p {
	min-height: 16px;
}

.text em {
	line-height: 9px;
}

.text mark {
	display: inline-block;
	padding-right: 2px;
	background: #c6c6c6;
	color: inherit;
}

.item {
	display: flex;
}

.item > span {
	flex: none;
	width: 19px;
	white-space: nowrap;
}

.item > p {
	flex: 1;
}

.sub {
	padding-left: 19px;
}

.sub > span {
	padding-left: 2px;
}

.text .cont {
	text-align-last: justify;
}

.crop {
	display: flex;
	justify-content: space-between;
	width: 435px;
	height: 16px;
	margin-left: 46px;
}

.crop i {
	width: 16px;
	border: 0 solid #d0d0d0;
}

.crop em {
	flex: 1;
	line-height: 4px;
}

.bottom {
	margin: 14px 0 34px 46px;
}

.bottom i {
	border-top-width: 1px;
}

.top {
	margin: 58px 0 0 46px;
}

.top i {
	border-bottom-width: 1px;
}

.crop i:first-child {
	border-right-width: 1px;
}

.crop i:last-child {
	border-left-width: 1px;
}

.vscroll {
	display: flex;
	flex-direction: column;
	background: #d9d9d9;
	padding-top: 1px;
}

.vscroll button, .thumb {
	height: 10px;
	background: #fff;
	border: 1px solid #c4c4c4;
}

.vscroll .before {
	flex: 171;
}

.vscroll .thumb {
	flex: 54;
}

.vscroll .after {
	flex: 180;
}

/* side pane */
.pane {
	display: flex;
	flex-direction: column;
	min-height: 0;
	padding: 0 9px 9px 10px;
}

.pane-head {
	flex: none;
	display: flex;
	align-items: center;
	height: 30px;
}

.pane-head h2 {
	flex: 1;
	color: #2b579a;
	font-size: 15px;
	font-weight: normal;
}

.pane-head button {
	width: 8px;
	margin-left: 19px;
}

.pane-head button:last-child {
	margin-right: 2px;
}

.pane-box {
	flex: 1;
	min-height: 0;
	display: flex;
	flex-direction: column;
	background: #fff;
	box-shadow: 0 0 1px #aaa;
}

.pane-tabs {
	flex: none;
	display: flex;
	gap: 3px;
	height: 27px;
	padding: 2px 0 0 1px;
	background: #cfcfcf;
}

.tab {
	flex: 1;
	background: #fff;
	border-radius: 3px 3px 0 0;
	color: #143264;
	font-size: 11px;
	font-weight: bold;
}

.navy {
	width: 29px;
	height: 25px;
	background: #143264;
	border-radius: 2px;
}

.kebab {
	width: 24px;
}

.fold {
	width: 11px;
	height: 28px;
	margin: -2px 0 0 14px;
	background: #fff;
	border: 1px solid #ddd;
}

.pane-scroll {
	flex: 1;
	min-height: 0;
	overflow: hidden;
	margin-top: 7px;
	padding: 0 6px;
}

.card {
	padding: 0 7px;
	background: #eee;
}

.current {
	border: 2px solid #a9cff5;
	border-top: none;
	border-radius: 0 0 3px 3px;
	padding: 0 6px;
	margin-bottom: 9px;
}

.inner {
	padding: 0 8px;
	background: #fff;
	border: 1px solid #ddd;
	border-radius: 0 0 3px 3px;
}

.current .inner {
	border-top: none;
}

.note {
	background: #f3f6ff;
	color: #444;
	padding: 3px 7px 7px;
	font-size: 9px;
	line-height: 16px;
	white-space: nowrap;
}

.current .note {
	margin-bottom: 4px;
}

.fold-row {
	width: 100%;
	height: 32px;
	justify-content: space-between;
	padding: 0 6px;
	border-top: 1px solid #d8d8d8;
	color: #143264;
	font-size: 9px;
	font-weight: bold;
}

.actions {
	display: flex;
	justify-content: flex-end;
	align-items: center;
	gap: 18px;
	height: 38px;
	border-top: 1px solid #d8d8d8;
}

.option {
	width: 93px;
	height: 19px;
	background: #eee;
	border-radius: 3px;
	color: #999;
}

.send {
	width: 21px;
	height: 21px;
	border-radius: 50%;
	background: #f0f4ff;
}

.check {
	display: flex;
	align-items: center;
	gap: 4px;
	height: 25px;
	color: #999;
	font-size: 9px;
	font-weight: bold;
}

.check input {
	appearance: none;
	width: 10px;
	height: 10px;
	background: #fff;
	border: 1px solid #ddd;
	border-radius: 2px;
}

.card header {
	position: relative;
	display: flex;
	align-items: center;
	height: 33px;
	margin: 0 -7px 7px;
	padding: 0 12px 3px 9px;
	background: #143264;
	border-radius: 2px 2px 0 0;
	color: #fff;
}

.card h3 {
	flex: 1;
	margin-left: 5px;
	font-size: 9px;
	white-space: nowrap;
}

.tip {
	position: absolute;
	right: 6px;
	top: 26px;
	padding: 0 5px;
	height: 13px;
	border-radius: 2px;
	background: #222;
	font-size: 8px;
}

.heading {
	display: flex;
	align-items: center;
	gap: 4px;
	height: 40px;
}

.tag {
	padding: 0 1px;
	background: #f0205f;
	color: #fff;
	font-size: 7px;
	line-height: 9px;
}

.heading h4 {
	color: #143264;
	font-size: 10px;
	line-height: 11px;
	white-space: nowrap;
}

.tall {
	padding-top: 6px;
	height: 110px;
}

.totop {
	flex: none;
	display: flex;
	align-items: center;
	justify-content: center;
	gap: 4px;
	height: 17px;
	border-top: 1px solid #ddd;
	color: #2b7fd0;
}

/* status bar */
.status {
	flex: none;
	display: flex;
	align-items: center;
	height: 16px;
	padding: 0 6px 0 5px;
	background: #f3f2f1;
	border-bottom: 1px solid #999;
	white-space: nowrap;
}

.wc {
	margin: 0 13px 0 11px;
}

.lang {
	margin: 0 12px;
}

.views {
	display: flex;
	align-items: center;
	align-self: stretch;
	margin-left: auto;
}

.views button {
	width: 27px;
	height: 15px;
}

.views .fc {
	width: 48px;
	font-size: 7px;
	gap: 2px;
}

.views .on {
	background: #c8c6c4;
}

.views .minus {
	margin-left: 4px;
}

.views input {
	appearance: none;
	width: 66px;
	height: 8px;
	margin: 0 4px;
	background: linear-gradient(#999, #999) center / 100% 1px no-repeat;
}

.views input::-webkit-slider-thumb {
	appearance: none;
	width: 3px;
	height: 8px;
	background: #555;
}

.pct {
	margin-left: 8px;
}

/* red annotations over the window */
.frame {
	position: absolute;
	left: 189px;
	top: 206px;
	width: 429px;
	height: 323px;
	border: 3px solid #ed1c24;
	border-radius: 9px;
}

.callout {
	position: absolute;
	display: flex;
	align-items: center;
	gap: 2px;
	color: #ed1c24;
	font-size: 23px;
	line-height: 28px;
	font-weight: bold;
	white-space: nowrap;
}

.scroll {
	left: 684px;
	top: 153px;
}

.button {
	left: 748px;
	top: 360px;
}

.arrow {
	position: absolute;
	left: 768px;
	top: 191px;
}

.ring {
	position: absolute;
	left: 968px;
	top: 341px;
	width: 37px;
	height: 37px;
	border: 2px solid #ed1c24;
	border-radius: 50%;
}
```
